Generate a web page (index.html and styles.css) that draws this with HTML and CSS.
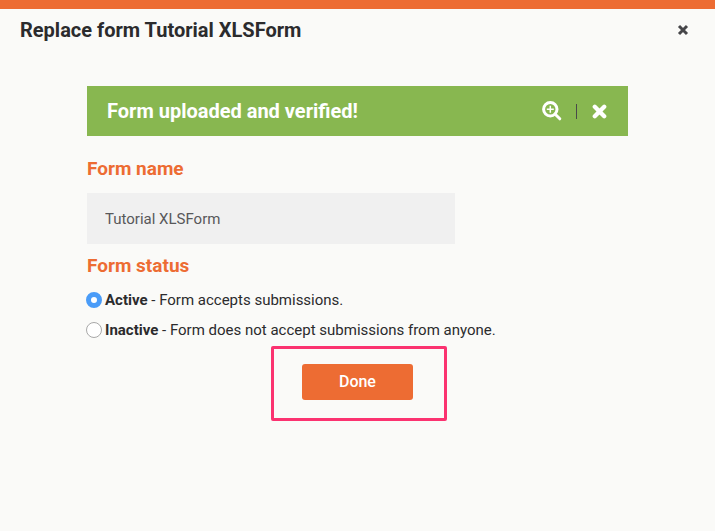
FILE: index.html
```html
<!DOCTYPE html>
<html lang="en">
<head>
<meta charset="utf-8">
<title>Replace form</title>
<link rel="stylesheet" href="styles.css">
</head>
<body>
<main class="dialog">
  <header class="dialog-header">
    <h1 class="dialog-title">Replace form Tutorial XLSForm</h1>
    <button class="icon-button" type="button" aria-label="Close">
      <svg class="icon-close" viewBox="0 0 14 14"><path d="M3 3l8 8M11 3l-8 8"/></svg>
    </button>
  </header>
  <form class="dialog-body">
    <div class="banner">
      <strong class="banner-text">Form uploaded and verified!</strong>
      <div class="banner-actions">
        <button class="icon-button" type="button" aria-label="Preview">
          <svg class="icon-zoom" viewBox="0 0 20 20"><circle cx="8.3" cy="8.3" r="6.7"/><path d="M13.2 13.2l4.6 4.6"/><path class="thin" d="M8.3 4.8v7M4.8 8.3h7"/></svg>
        </button>
        <span class="divider"></span>
        <button class="icon-button" type="button" aria-label="Dismiss">
          <svg class="icon-dismiss" viewBox="0 0 14 14"><path d="M2.6 2.6l8.8 8.8M11.4 2.6l-8.8 8.8"/></svg>
        </button>
      </div>
    </div>
    <label class="field-label" for="form-name">Form name</label>
    <input class="text-field" id="form-name" type="text" value="Tutorial XLSForm">
    <fieldset class="status">
      <legend class="field-label">Form status</legend>
      <label class="option"><input class="radio" type="radio" name="status" checked><span><b>Active</b> - Form accepts submissions.</span></label>
      <label class="option"><input class="radio" type="radio" name="status"><span><b>Inactive</b> - Form does not accept submissions from anyone.</span></label>
    </fieldset>
    <div class="highlight">
      <button class="done" type="button">Done</button>
    </div>
  </form>
</main>
</body>
</html>
```
FILE: styles.css
```css
* {
  box-sizing: border-box;
}

body {
  margin: 0;
  background: #fafaf8;
  color: #2b2b2d;
  font: 15px/20px Roboto, "Liberation Sans", sans-serif;
}

.dialog {
  border-top: 9px solid #ed6c33;
}

.dialog-header {
  display: flex;
  align-items: center;
  justify-content: space-between;
  height: 42px;
  padding: 0 25px 0 20px;
}

.dialog-title {
  margin: 0;
  font-size: 20px;
  font-weight: 700;
  line-height: 24px;
}

.icon-button {
  display: flex;
  padding: 0;
  border: 0;
  background: none;
  color: inherit;
}

svg {
  display: block;
  fill: none;
  stroke: currentColor;
  stroke-width: 3;
  stroke-linecap: round;
}

.icon-close {
  width: 14px;
  height: 14px;
  color: #464649;
  stroke-linecap: butt;
}

.dialog-body {
  padding: 35px 87px 20px;
}

.banner {
  display: flex;
  align-items: center;
  justify-content: space-between;
  height: 50px;
  padding: 0 21px 0 20px;
  background: #88b750;
  color: #fff;
}

.banner-text {
  font-size: 20px;
  line-height: 24px;
}

.banner-actions {
  display: flex;
  align-items: center;
}

.icon-zoom {
  width: 20px;
  height: 20px;
}

.icon-zoom .thin {
  stroke-width: 1.5;
  stroke-linecap: butt;
}

.icon-dismiss {
  width: 15px;
  height: 15px;
  stroke-width: 4;
}

.divider {
  width: 1px;
  height: 15px;
  margin: 0 15px 0 14px;
  background: #4a4a4a;
}

.field-label {
  display: block;
  padding: 0;
  color: #ed6c33;
  font-size: 19px;
  font-weight: 700;
  line-height: 24px;
}

.banner + .field-label {
  margin: 21px 0 12px;
}

.text-field {
  display: block;
  width: 68%;
  height: 51px;
  padding: 0 18px;
  border: 0;
  background: #f0f0f0;
  color: #58585a;
  font: inherit;
}

.status {
  min-width: 0;
  margin: 10px 0 0;
  padding: 0;
  border: 0;
}

.status .field-label {
  margin-bottom: 7px;
}

.option {
  display: flex;
  align-items: center;
  gap: 3px;
  height: 30px;
  margin-left: -1px;
}

.radio {
  appearance: none;
  flex: none;
  width: 16px;
  height: 16px;
  margin: 0;
  border: 1px solid #a8a8a8;
  border-radius: 50%;
  background: #fff;
}

.radio:checked {
  border: 5px solid #4a9cf8;
}

.highlight {
  width: fit-content;
  margin: 1px 0 0 34%;
  padding: 15px 31px 18px 28px;
  border: 3px solid #fb3270;
  border-radius: 2px;
}

.done {
  display: block;
  width: 111px;
  height: 36px;
  padding: 0;
  border: 0;
  border-radius: 3px;
  background: #ed6c33;
  color: #fff;
  font: 500 16px/20px Roboto, "Liberation Sans", sans-serif;
}
```
